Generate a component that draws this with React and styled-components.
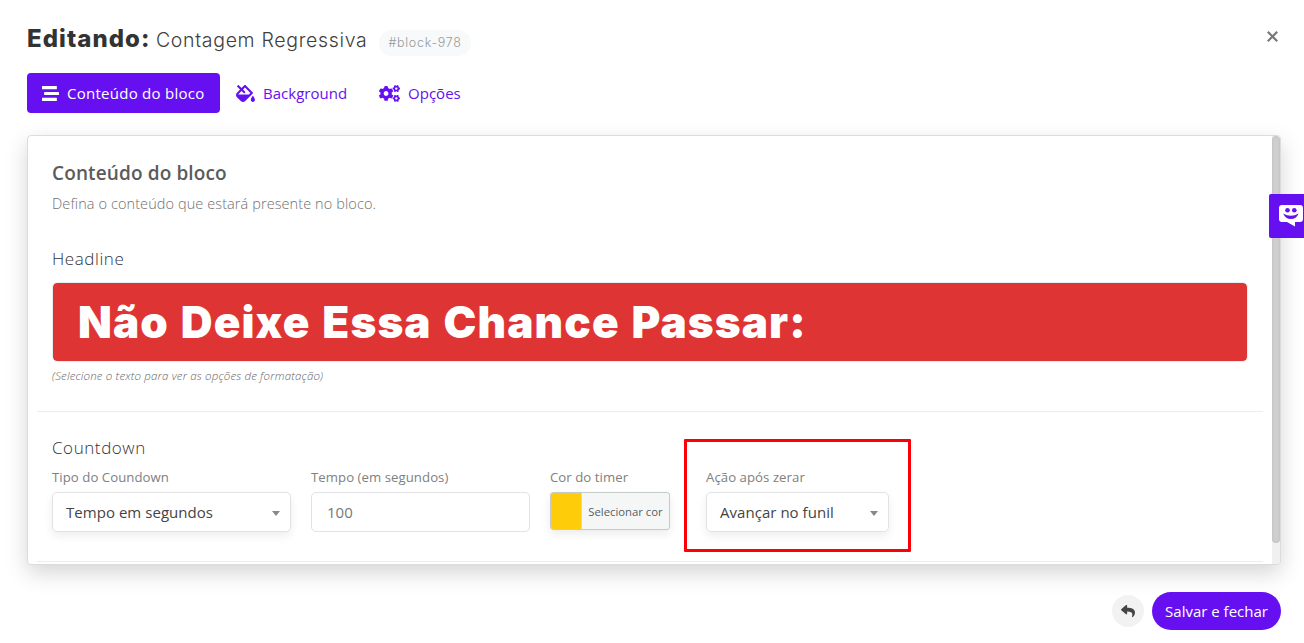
import React from "react";
import styled, { createGlobalStyle } from "styled-components";
import { FaStream, FaFillDrip, FaCogs, FaReply } from "react-icons/fa";

const purple = "#6610f2";
const titleFont = `Inter, sans-serif`;

const GlobalStyle = createGlobalStyle`
  * {
    box-sizing: border-box;
  }
  body {
    margin: 0;
    background-color: #fff;
    font-family: "Open Sans", sans-serif;
    color: #404040;
    overflow: hidden;
  }
`;

const Page = styled.div`
  position: relative;
  height: 643px;
  padding: 24px 23px 0 27px;
  display: flex;
  flex-direction: column;
`;

const Header = styled.header`
  display: flex;
  height: 32px;
`;

const Title = styled.h1`
  margin: 0;
  width: 129px;
  font-family: ${titleFont};
  font-size: 24px;
  font-weight: 800;
  line-height: 30px;
  letter-spacing: 1.05px;
  color: #333;
`;

const BlockName = styled.span`
  width: 223px;
  font-family: ${titleFont};
  font-size: 19.5px;
  font-weight: 300;
  line-height: 33px;
  letter-spacing: 0.67px;
`;

const BlockId = styled.span`
  width: 92px;
  height: 26px;
  margin-top: 6px;
  border-radius: 13px;
  background-color: #f8f9fa;
  font-family: ${titleFont};
  font-size: 12.5px;
  font-weight: 300;
  line-height: 25px;
  letter-spacing: 0.7px;
  text-align: center;
  color: #999;
`;

const CloseButton = styled.button`
  width: 17px;
  height: 17px;
  margin: 4px 0 0 auto;
  padding: 3px;
  border: 0;
  background: none;
  display: flex;
`;

const Tabs = styled.nav`
  display: flex;
  margin-top: 17px;
`;

const Tab = styled.div`
  width: ${({ width }) => width}px;
  height: 40px;
  padding-left: ${({ active }) => (active ? 15 : 16)}px;
  display: flex;
  align-items: center;
  gap: 8px;
  border-radius: 4px;
  background-color: ${({ active }) => (active ? purple : "transparent")};
  color: ${({ active }) => (active ? "#fff" : purple)};
  font-size: 15px;
  line-height: 40px;
  white-space: nowrap;
  letter-spacing: ${({ active }) => (active ? 0.26 : 0.02)}px;
`;

const Card = styled.main`
  width: 1254px;
  height: 430px;
  margin-top: 22px;
  display: flex;
  border: 1px solid #dcdcdf;
  border-radius: 4px;
  background-color: #fff;
  box-shadow: 0 8px 22px rgba(0, 0, 0, 0.17);
  overflow: hidden;
`;

const CardBody = styled.div`
  flex: 1;
  padding: 25px 24px 0;
`;

const ScrollTrack = styled.div`
  width: 8px;
  background-color: #f0f0f0;
`;

const ScrollThumb = styled.div`
  height: 407px;
  border-radius: 4px;
  background-color: #cfcfcf;
  box-shadow: inset 0 0 3px rgba(0, 0, 0, 0.1);
`;

const SectionTitle = styled.h2`
  margin: 0;
  font-size: 19px;
  font-weight: 600;
  line-height: 24px;
  letter-spacing: 0.12px;
  color: #5b5b5b;
`;

const Description = styled.p`
  margin: 9px 0 34px;
  font-size: 14.5px;
  font-weight: 300;
  line-height: 20px;
  letter-spacing: 0.09px;
  color: #707070;
`;

const FieldTitle = styled.h3`
  margin: 0;
  font-size: 17px;
  font-weight: 300;
  line-height: 22px;
  letter-spacing: 0.57px;
  color: #333;
`;

const HeadlineEditor = styled.div`
  width: 1196px;
  height: 80px;
  margin-top: 12px;
  padding-left: 25px;
  border: 1px solid #e6eeee;
  border-radius: 5px;
  background-color: #df3434;
  background-clip: padding-box;
  color: #fff;
  font-family: ${titleFont};
  font-size: 44px;
  font-weight: 900;
  line-height: 79px;
  letter-spacing: 1.1px;
  word-spacing: 2px;
`;

const Hint = styled.p`
  margin: 5px 0 0;
  font-size: 11.5px;
  font-style: italic;
  font-weight: 300;
  line-height: 18px;
  letter-spacing: 0.15px;
  color: #666;
`;

const Divider = styled.hr`
  margin: ${({ top }) => top}px -15px 0;
  border: 0;
  border-top: 1px solid #ececec;
`;

const CountdownTitle = styled(FieldTitle)`
  margin-top: 25px;
`;

const Fields = styled.div`
  display: flex;
  height: 65px;
  margin-top: 8px;
`;

const Field = styled.div`
  width: ${({ width }) => width}px;
  margin-right: ${({ space }) => space}px;
`;

const Label = styled.label`
  display: block;
  margin-bottom: 5px;
  font-size: 13.2px;
  line-height: 20px;
  letter-spacing: 0.05px;
  white-space: nowrap;
  color: #808080;
`;

const Select = styled.div`
  height: 40px;
  padding: 0 10px 0 13px;
  display: flex;
  align-items: center;
  justify-content: space-between;
  border: 1px solid #e2e2e5;
  border-radius: 5px;
  box-shadow: 0 4px 10px rgba(0, 0, 0, 0.07);
  font-size: 15px;
  letter-spacing: 0.04px;
  white-space: nowrap;
  color: #444;
`;

const Caret = styled.span`
  margin-top: 2px;
  border: 4.5px solid transparent;
  border-top: 5.5px solid #888;
  border-bottom: 0;
`;

const Input = styled.div`
  height: 40px;
  padding-left: 15px;
  border: 1px solid #e2e2e5;
  border-radius: 5px;
  font-size: 15px;
  line-height: 38px;
  color: #777;
`;

const ColorPicker = styled.div`
  height: 38px;
  display: flex;
  border: 1px solid #c5cbc9;
  border-radius: 3px;
  background-color: #f5f7f6;
  box-shadow: 0 4px 10px rgba(0, 0, 0, 0.08);
  overflow: hidden;
`;

const Swatch = styled.div`
  width: 30px;
  background-color: #ffcc0a;
`;

const ColorText = styled.span`
  flex: 1;
  border-left: 1px solid #d5dad8;
  font-size: 11.3px;
  line-height: 37px;
  text-align: center;
  white-space: nowrap;
  color: #555d66;
`;

// red frame laid over the last field of the countdown row
const Highlight = styled.div`
  position: absolute;
  left: 684px;
  top: 439px;
  width: 227px;
  height: 113px;
  border: 3px solid #fb0007;
  border-radius: 1px;
`;

const Footer = styled.footer`
  width: 1254px;
  display: flex;
  justify-content: flex-end;
  align-items: center;
  gap: 8px;
  margin-top: 27px;
`;

const BackButton = styled.button`
  width: 32px;
  height: 32px;
  padding: 0;
  display: flex;
  align-items: center;
  justify-content: center;
  border: 0;
  border-radius: 50%;
  background-color: #f2f2f2;
  color: #444;
`;

const SaveButton = styled.button`
  width: 129px;
  height: 38px;
  padding: 0;
  border: 0;
  border-radius: 19px;
  background-color: ${purple};
  color: #fff;
  font-family: inherit;
  font-size: 15px;
`;

const ChatButton = styled.div`
  position: absolute;
  right: 0;
  top: 194px;
  width: 35px;
  height: 44px;
  padding: 11px 0 0 10px;
  border-radius: 2px 0 0 2px;
  background-color: ${purple};
`;

function CloseIcon() {
  return (
    <svg width="11" height="11" viewBox="0 0 11 11">
      <path d="M0.8 0.8L10.2 10.2M10.2 0.8L0.8 10.2" stroke="#777" strokeWidth="2.2" />
    </svg>
  );
}

function ChatIcon() {
  return (
    <svg width="25" height="22" viewBox="0 0 25 22" display="block">
      <path d="M3 0h18q3 0 3 3v11q0 3-3 3h-5v4.500L8 17H3q-3 0-3-3V3q0-3 3-3z" fill="#fff" />
      <circle cx="8.500" cy="5.300" r="2.300" fill={purple} />
      <circle cx="15.300" cy="5.300" r="2.300" fill={purple} />
      <path d="M4.200 8.500q7.700 4.400 15.400 0q-2.300 5.600-7.700 5.600T4.200 8.500z" fill={purple} />
    </svg>
  );
}

export default function App() {
  return (
    <>
      <GlobalStyle />
      <Page>
        <Header>
          <Title>Editando:</Title>
          <BlockName>Contagem Regressiva</BlockName>
          <BlockId>#block-978</BlockId>
          <CloseButton aria-label="Fechar">
            <CloseIcon />
          </CloseButton>
        </Header>
        <Tabs>
          <Tab active width={193}>
            <FaStream size={17} />
            Conteúdo do bloco
          </Tab>
          <Tab width={143}>
            <FaFillDrip size={19} />
            Background
          </Tab>
          <Tab width={115}>
            <FaCogs size={21} />
            Opções
          </Tab>
        </Tabs>
        <Card>
          <CardBody>
            <SectionTitle>Conteúdo do bloco</SectionTitle>
            <Description>Defina o conteúdo que estará presente no bloco.</Description>
            <FieldTitle>Headline</FieldTitle>
            <HeadlineEditor>Não Deixe Essa Chance Passar:</HeadlineEditor>
            <Hint>(Selecione o texto para ver as opções de formatação)</Hint>
            <Divider top={26} />
            <CountdownTitle>Countdown</CountdownTitle>
            <Fields>
              <Field width={239} space={20}>
                <Label>Tipo do Coundown</Label>
                <Select>
                  Tempo em segundos
                  <Caret />
                </Select>
              </Field>
              <Field width={219} space={20}>
                <Label>Tempo (em segundos)</Label>
                <Input>100</Input>
              </Field>
              <Field width={120} space={36}>
                <Label>Cor do timer</Label>
                <ColorPicker>
                  <Swatch />
                  <ColorText>Selecionar cor</ColorText>
                </ColorPicker>
              </Field>
              <Field width={183} space={0}>
                <Label>Ação após zerar</Label>
                <Select>
                  Avançar no funil
                  <Caret />
                </Select>
              </Field>
            </Fields>
            <Divider top={29} />
          </CardBody>
          <ScrollTrack>
            <ScrollThumb />
          </ScrollTrack>
        </Card>
        <Footer>
          <BackButton aria-label="Voltar">
            <FaReply size={14} />
          </BackButton>
          <SaveButton>Salvar e fechar</SaveButton>
        </Footer>
        <Highlight />
        <ChatButton>
          <ChatIcon />
        </ChatButton>
      </Page>
    </>
  );
}
